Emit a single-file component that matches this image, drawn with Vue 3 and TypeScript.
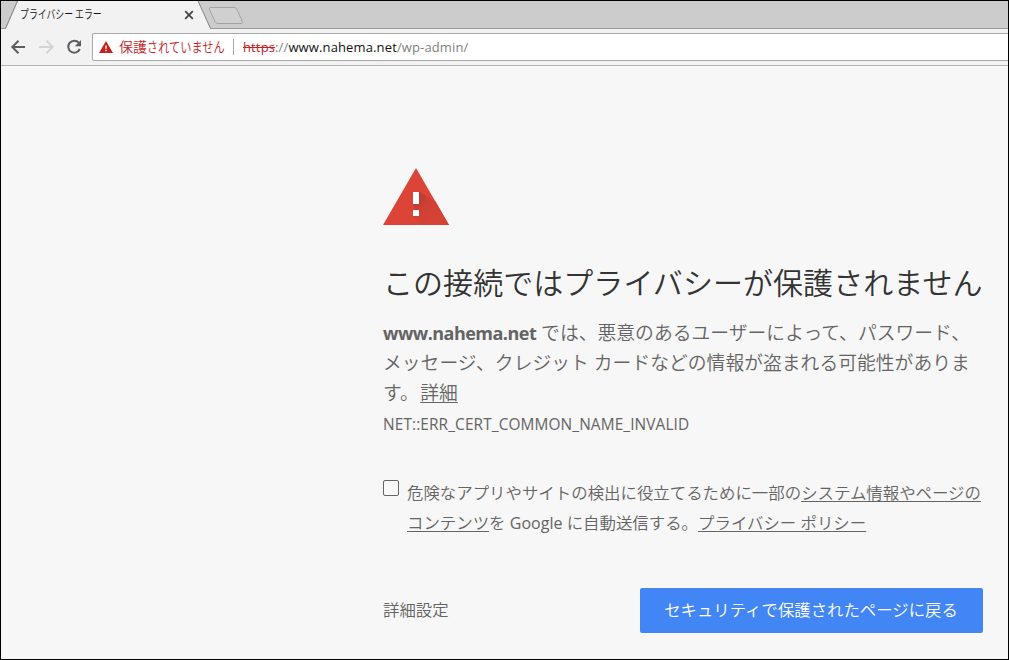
<script setup lang="ts">
const tabTitle = 'プライバシー エラー'
const host = 'www.nahema.net'
const errorCode = 'NET::ERR_CERT_COMMON_NAME_INVALID'
</script>

<template>
  <div class="window">
    <header class="tabs">
      <svg class="tab-shapes" width="1007" height="28" viewBox="1 1 1007 28">
        <path d="M1 28.5H5.5L17.5 1H189.5L198 1L210.5 28.5H1008" fill="none" stroke="#999" />
        <path d="M6 29L18 1H198L210.5 29Z" fill="#f2f2f2" />
        <path d="M5.5 28.5L17.5 1M198 1L210.5 28.5" fill="none" stroke="#8f8f8f" />
        <path d="M210.5 7.5H234.5Q236 7.5 236.7 9L242.3 21.5Q243.2 23.5 241 23.5H218Q216 23.5 215.2 22L209.5 9.5Q208.7 7.5 210.5 7.5Z" fill="#d0d0d0" stroke="#a3a3a3" />
      </svg>
      <span class="tab-title">{{ tabTitle }}</span>
      <svg class="tab-close" width="10" height="10" viewBox="0 0 10 10">
        <path d="M1.2 1.2L8.8 8.8M8.8 1.2L1.2 8.8" stroke="#414141" stroke-width="1.7" />
      </svg>
    </header>
    <nav class="toolbar">
      <svg class="nav-icons" width="84" height="20" viewBox="0 0 84 20">
        <g fill="none" stroke-width="2">
          <path d="M24 10H12M17.5 3.7L11.3 10L17.5 16.3" stroke="#5a5d61" />
          <path d="M38 10H51M45.5 3.7L51.7 10L45.5 16.3" stroke="#d4d4d4" />
          <path d="M77.8 5.7A6 6 0 1 0 78.8 12" stroke="#5a5d61" />
        </g>
        <path d="M80 3V9.2H73.8Z" fill="#5a5d61" />
      </svg>
      <div class="address">
        <svg class="warn" width="14" height="12" viewBox="0 0 14 12">
          <path d="M7 0L14 12H0Z" fill="#c5221f" />
          <path d="M6.3 4.5H7.7V7.7H6.3ZM6.3 8.8H7.7V10.2H6.3Z" fill="#fff" />
        </svg>
        <span class="status">保護<span class="kana">されていません</span></span>
        <i class="divider"></i>
        <span class="url"><s>https</s><span>://</span><b>{{ host }}</b><span>/wp-admin/</span></span>
      </div>
    </nav>
    <main>
      <svg class="alert" width="66" height="57" viewBox="0 0 66 57">
        <defs>
          <linearGradient id="shade" gradientUnits="userSpaceOnUse" x1="32" y1="28" x2="52" y2="48">
            <stop offset="0" stop-color="#b83a2d" />
            <stop offset=".5" stop-color="#cf4135" />
            <stop offset="1" stop-color="#d54236" />
          </linearGradient>
        </defs>
        <path d="M33 0L66 57H0Z" fill="#db4437" />
        <path d="M36 24L52.5 33.5L66 57H39L30 48L33 45L30 36Z" fill="url(#shade)" />
        <path d="M30 24H36V36H30ZM30 42H36V48H30Z" fill="#fff" />
      </svg>
      <h1>この接続ではプライバシーが保護されません</h1>
      <p class="lead">
        <strong>{{ host }}</strong> では、悪意のあるユーザーによって、パスワード、<br />メッセージ、クレジット カードなどの情報が盗まれる可能性がありま<br />す。<a>詳細</a>
      </p>
      <div class="code">{{ errorCode }}</div>
      <div class="opt">
        <i class="box"></i>
        <p>危険なアプリやサイトの検出に役立てるために一部の<a>システム情報やページの<br />コンテンツ</a>を <span class="latin">Google</span> に自動送信する。<a>プライバシー ポリシー</a></p>
      </div>
      <div class="actions">
        <span>詳細設定</span>
        <button>セキュリティで保護されたページに戻る</button>
      </div>
    </main>
  </div>
</template>

<style>
body { margin: 0; }
</style>
<style scoped>
.window {
  box-sizing: border-box;
  width: 1009px;
  height: 660px;
  border: 1px solid #000;
  background: #f7f7f7;
  overflow: hidden;
  font-family: "Open Sans", "Noto Sans CJK JP", sans-serif;
  color: #646464;
}
.tabs { position: relative; height: 28px; background: #ccc; }
.tab-shapes { display: block; }
.tab-title {
  position: absolute;
  left: 19px;
  top: 4px;
  font: 350 12px/18px "Noto Sans CJK JP", sans-serif;
  color: #111;
  white-space: nowrap;
  transform: scaleX(.74);
  transform-origin: 0 0;
}
.tab-close { position: absolute; left: 183px; top: 9px; }
.toolbar {
  display: flex;
  align-items: center;
  box-sizing: border-box;
  height: 37px;
  background: #f2f2f2;
  border-bottom: 1px solid #b6b6b6;
}
.nav-icons { flex: none; margin-right: 7px; }
.address {
  display: flex;
  align-items: center;
  box-sizing: border-box;
  flex: 1;
  height: 28px;
  padding-left: 6px;
  background: #fff;
  border: 1px solid #a9a9a9;
  border-right: 0;
  border-radius: 2px 0 0 2px;
}
.warn { flex: none; }
.status {
  width: 107px;
  margin: -2px 0 0 6px;
  font: 350 14px/20px "Noto Sans CJK JP", sans-serif;
  color: #c5221f;
  white-space: nowrap;
}
.kana { display: inline-block; transform: scaleX(.8); transform-origin: 0 0; width: 78px; }
.divider { width: 1px; height: 16px; margin: 0 9px 0 7px; background: #aaa; }
.url { font-size: 13px; line-height: 20px; letter-spacing: .13px; color: #808080; white-space: nowrap; }
.url s { color: #c5221f; }
.url b { font-weight: 400; color: #111; }
main { width: 600px; margin: 102px 0 0 382px; }
.alert { display: block; }
h1 {
  margin: 36px 0 0;
  font-size: 30px;
  line-height: 44px;
  font-weight: 350;
  letter-spacing: .05px;
  color: #333;
  white-space: nowrap;
}
p { margin: 0; white-space: nowrap; }
.lead { margin-top: 13px; font-size: 18.75px; line-height: 30px; font-weight: 350; letter-spacing: .05px; }
.lead strong { font-size: 18px; font-weight: 700; letter-spacing: -.52px; }
.lead a { margin-left: 1.5px; }
a { text-decoration: underline; text-decoration-thickness: 1px; text-underline-offset: 2px; text-decoration-skip-ink: none; }
.code { margin-top: 6px; font-size: 15.4px; line-height: 22px; letter-spacing: .12px; white-space: nowrap; }
.opt { display: flex; margin-top: 42px; font-size: 16.43px; line-height: 30px; font-weight: 350; }
.latin { font-size: 16px; font-weight: 400; }
.box {
  box-sizing: border-box;
  flex: none;
  width: 16px;
  height: 16px;
  margin: 2px 8px 0 0;
  border: 1px solid #666;
  border-radius: 2px;
  background: #f9f9f9;
}
.actions {
  display: flex;
  justify-content: space-between;
  align-items: center;
  margin-top: 50px;
  font-size: 16.4px;
  font-weight: 350;
}
.actions span { margin-top: -4px; }
button {
  width: 343px;
  height: 45px;
  padding: 0 1px 4px 0;
  border: 0;
  border-radius: 2px;
  background: #4285f4;
  color: #fff;
  font: inherit;
  white-space: nowrap;
}
</style>
